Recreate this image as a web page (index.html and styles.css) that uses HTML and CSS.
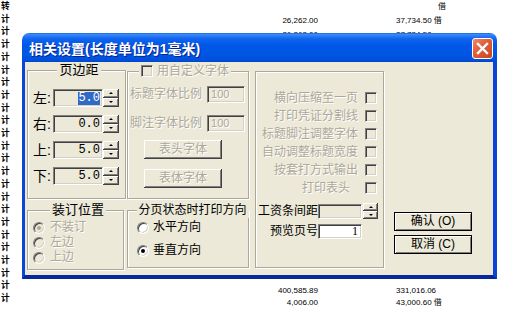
FILE: index.html
```html
<!DOCTYPE html>
<html lang="zh-CN">
<head>
<meta charset="utf-8">
<title>相关设置</title>
<link rel="stylesheet" href="styles.css">
</head>
<body>
<div class="page">
  <div class="bg-left">
    <div>转</div><div>计</div><div>计</div><div>计</div><div>计</div>
    <div>计</div><div>计</div><div>计</div><div>计</div><div>计</div>
    <div>计</div><div>计</div><div>计</div><div>计</div><div>计</div>
    <div>计</div><div>计</div><div>计</div><div>计</div><div>计</div>
    <div>计</div><div>计</div><div>计</div><div>计</div>
  </div>
  <div class="bg-nums">
    <div class="nums-top">
      <div class="nrow"><span class="c1"></span><span class="c2 c2-only">借</span></div>
      <div class="nrow"><span class="c1">26,262.00</span><span class="c2">37,734.50 借</span></div>
      <div class="nrow"><span class="c1">26,262.00</span><span class="c2">37,734.50</span></div>
    </div>
    <div class="nums-bottom">
      <div class="nrow"><span class="c1">400,585.89</span><span class="c2">331,016.06</span></div>
      <div class="nrow"><span class="c1">4,006.00</span><span class="c2">43,000.60 借</span></div>
    </div>
  </div>
</div>

<div class="dialog">
  <div class="titlebar">
    <span class="title">相关设置(长度单位为1毫米)</span>
    <span class="close">
      <svg width="19" height="19" viewBox="0 0 19 19"><path d="M5 5 L14 14 M14 5 L5 14" stroke="#fff" stroke-width="2.4" stroke-linecap="square"/></svg>
    </span>
  </div>
  <div class="client">
    <div class="col col-a">
      <div class="group g-margin">
        <div class="gtitle gtitle-lg">页边距</div>
        <div class="mrow first"><span class="mlabel">左:</span><span class="edit edit-m"><span class="sel">5.0</span></span><span class="spin"><i class="up"></i><i class="down"></i></span></div>
        <div class="mrow"><span class="mlabel">右:</span><span class="edit edit-m">0.0</span><span class="spin"><i class="up"></i><i class="down"></i></span></div>
        <div class="mrow"><span class="mlabel">上:</span><span class="edit edit-m">5.0</span><span class="spin"><i class="up"></i><i class="down"></i></span></div>
        <div class="mrow"><span class="mlabel">下:</span><span class="edit edit-m">5.0</span><span class="spin"><i class="up"></i><i class="down"></i></span></div>
      </div>
      <div class="group g-bind">
        <div class="gtitle gtitle-lg">装订位置</div>
        <div class="rrow first dis"><span class="radio dis-radio checked"></span><span class="rtext">不装订</span></div>
        <div class="rrow dis"><span class="radio dis-radio"></span><span class="rtext">左边</span></div>
        <div class="rrow dis"><span class="radio dis-radio"></span><span class="rtext">上边</span></div>
      </div>
    </div>

    <div class="col col-b">
      <div class="group g-font">
        <div class="gtitle gtitle-left dis"><span class="check"></span><span>用自定义字体</span></div>
        <div class="frow first dis"><span class="ftext">标题字体比例</span><span class="edit edit-f">100</span></div>
        <div class="frow dis"><span class="ftext">脚注字体比例</span><span class="edit edit-f">100</span></div>
        <div class="rbtn first dis">表头字体</div>
        <div class="rbtn dis">表体字体</div>
      </div>
      <div class="group g-dir">
        <div class="gtitle">分页状态时打印方向</div>
        <div class="rrow first"><span class="radio"></span><span class="rtext">水平方向</span></div>
        <div class="rrow second"><span class="radio checked"></span><span class="rtext">垂直方向</span></div>
      </div>
    </div>

    <div class="col col-c">
      <div class="group g-opts">
        <div class="crow first dis"><span class="ctext">横向压缩至一页</span><span class="check"></span></div>
        <div class="crow dis"><span class="ctext">打印凭证分割线</span><span class="check"></span></div>
        <div class="crow dis"><span class="ctext">标题脚注调整字体</span><span class="check"></span></div>
        <div class="crow dis"><span class="ctext">自动调整标题宽度</span><span class="check"></span></div>
        <div class="crow dis"><span class="ctext">按套打方式输出</span><span class="check"></span></div>
        <div class="crow dis"><span class="ctext ctext-short">打印表头</span><span class="check"></span></div>
        <div class="srow first"><span class="slabel">工资条间距</span><span class="edit edit-s"></span><span class="spin spin-s"><i class="up"></i><i class="down"></i></span></div>
        <div class="srow second"><span class="slabel">预览页号</span><span class="edit edit-s edit-white">1</span></div>
      </div>
    </div>

    <div class="col col-d">
      <div class="btn first">确认 (O)</div>
      <div class="btn">取消 (C)</div>
    </div>
  </div>
</div>
</body>
</html>
```

FILE: styles.css
```css
* { box-sizing: border-box; margin: 0; padding: 0; }

html, body {
  width: 520px;
  height: 312px;
  overflow: hidden;
  background: #fff;
}

body {
  position: relative;
  font-family: "Liberation Sans", "Noto Sans CJK SC", sans-serif;
  color: #000;
}

/* ---------- background sheet ---------- */
.page {
  display: flex;
  height: 312px;
}

.bg-left {
  width: 12px;
  padding: 0 0 0 1px;
  font: 700 8.7px/12.7px "Noto Sans CJK SC", sans-serif;
  white-space: nowrap;
}

.bg-nums {
  margin-left: 258px;
  height: 312px;
  padding-bottom: 3px;
  display: flex;
  flex-direction: column;
  justify-content: space-between;
  font: 8px/14px "Liberation Sans", "Noto Sans CJK SC", sans-serif;
}

.nums-bottom { line-height: 12px; }

.nrow {
  display: flex;
  white-space: nowrap;
}

.c1 {
  width: 48px;
  text-align: right;
}

.c2 { margin-left: 78px; }
.c2-only { padding-left: 42px; }

/* ---------- dialog window ---------- */
.dialog {
  position: absolute;
  left: 22px;
  top: 33px;
  width: 475px;
  height: 246px;
  display: flex;
  flex-direction: column;
}

.titlebar {
  height: 29px;
  flex: none;
  display: flex;
  align-items: center;
  padding: 2px 4px 0 7px;
  border-radius: 7px 7px 0 0;
  background: linear-gradient(to bottom,
    #0a5ad8 0px, #3d8ef8 1px, #2a7bf6 3px, #0f63ee 6px,
    #0058e8 12px, #0055e4 22px, #0050dc 27px, #0046c8 29px);
}

.title {
  color: #fff;
  font: 700 14px/20px "Liberation Sans", "Noto Sans CJK SC", sans-serif;
  text-shadow: 1px 1px 0 #0a2290;
  white-space: nowrap;
}

.close {
  margin-left: auto;
  width: 21px;
  height: 21px;
  border: 1px solid #fff;
  border-radius: 3px;
  background: linear-gradient(135deg, #ef8a6c 0%, #e1603c 40%, #c9441f 100%);
  display: flex;
  align-items: center;
  justify-content: center;
}

.client {
  flex: 1;
  display: flex;
  align-items: flex-start;
  background: #ece9d8;
  border-style: solid;
  border-width: 0 4px 4px 3px;
  border-color: #0b46d8 #0a44d6 #08289e #0b46d8;
  padding: 8px 0 0 2px;
  font-size: 12px;
}

.col { display: flex; flex-direction: column; }
.col-a { width: 99px; }
.col-b { width: 122px; margin-left: 1px; margin-top: 1px; }
.col-c { width: 129px; margin-left: 6px; margin-top: 1px; }
.col-d { width: 78px; margin-left: 10px; }

/* ---------- group boxes ---------- */
.group {
  border: 1px solid #aca899;
  box-shadow: inset 1px 1px 0 #fff, 1px 1px 0 #fff;
  display: flex;
  flex-direction: column;
}

.gtitle {
  align-self: center;
  margin-top: -9px;
  padding: 0 2px;
  background: #ece9d8;
  font: 12px/16px "Liberation Sans", "Noto Sans CJK SC", sans-serif;
  white-space: nowrap;
  display: flex;
  align-items: center;
}

.gtitle-lg { font-size: 13px; }

.gtitle-left {
  align-self: flex-start;
  margin-left: 9px;
}

.gtitle-left .check { margin-right: 4px; }

.dis {
  color: #aca899;
  text-shadow: 1px 1px 0 #fff;
}

.g-margin { height: 129px; padding-left: 5px; }
.g-bind { width: 97px; height: 60px; margin-top: 11px; padding-left: 5px; }
.g-font { height: 128px; padding-left: 2px; }
.g-dir { height: 58px; margin-top: 11px; padding-left: 9px; }
.g-opts { height: 197px; }

/* margin rows */
.mrow {
  display: flex;
  align-items: center;
  height: 18px;
  margin-top: 8px;
}
.mrow.first { margin-top: 11px; }

.mlabel {
  width: 20px;
  font: 14px/18px "Liberation Sans", "Noto Sans CJK SC", sans-serif;
}

/* edits */
.edit {
  border: 1px solid;
  border-color: #808080 #fff #fff #808080;
  box-shadow: inset 1px 1px 0 #404040, inset -1px -1px 0 #d4d0c8;
  background: #ece9d8;
  display: flex;
  align-items: center;
}

.edit-m {
  width: 50px;
  height: 18px;
  justify-content: flex-end;
  padding-right: 2px;
  font: 12px/13px "Liberation Mono", monospace;
}

.sel {
  background: #316ac5;
  color: #fff;
}

.edit-f {
  width: 38px;
  height: 17px;
  margin-left: 5px;
  padding-left: 3px;
  font: 11px/13px "Liberation Sans", sans-serif;
}

.edit-s {
  width: 44px;
  height: 15px;
}

.edit-white {
  background: #fff;
  justify-content: flex-end;
  padding-right: 3px;
  font: 12px/13px "Liberation Serif", serif;
}

/* spin buttons */
.spin {
  width: 16px;
  height: 18px;
  display: flex;
  flex-direction: column;
}

.spin i {
  flex: 1;
  background: #ece9d8;
  box-shadow: inset -1px -1px 0 #404040, inset 1px 1px 0 #fff, inset -2px -2px 0 #808080;
  display: flex;
  align-items: center;
  justify-content: center;
}

.spin i::after {
  content: "";
  border-left: 2px solid transparent;
  border-right: 2px solid transparent;
}

.spin .up::after { border-bottom: 2px solid #000; margin-top: -1px; }
.spin .down::after { border-top: 2px solid #000; margin-top: -1px; }

.spin-s {
  width: 15px;
  height: 16px;
  margin-left: 1px;
}

/* radios */
.rrow {
  display: flex;
  align-items: center;
  height: 15px;
}
.rrow.first { margin-top: 2px; }
.g-dir .rrow.second { margin-top: 8px; }

.radio {
  position: relative;
  width: 12px;
  height: 12px;
  flex: none;
  border-radius: 50%;
  background: #fff;
  border: 1px solid;
  border-color: #808080 #fff #fff #808080;
  box-shadow: inset 1px 1px 0 #404040, inset -1px -1px 0 #d4d0c8;
}

.dis-radio { background: #ece9d8; }

.radio.checked::after {
  content: "";
  position: absolute;
  left: 3px;
  top: 3px;
  width: 4px;
  height: 4px;
  border-radius: 50%;
  background: #000;
}

.dis-radio.checked::after { background: #aca899; }

.rtext {
  margin-left: 4px;
  line-height: 15px;
}

.g-bind .rtext { margin-left: 5px; }

/* checkboxes */
.check {
  display: inline-block;
  width: 12px;
  height: 12px;
  flex: none;
  background: #ece9d8;
  border: 1px solid;
  border-color: #808080 #fff #fff #808080;
  box-shadow: inset 1px 1px 0 #404040, inset -1px -1px 0 #d4d0c8;
}

/* font group rows */
.frow {
  display: flex;
  align-items: center;
  height: 17px;
  margin-top: 12px;
}
.frow.first { margin-top: 7px; }

.ftext { line-height: 17px; }

.rbtn {
  width: 78px;
  height: 19px;
  margin: 10px 0 0 14px;
  background: #ece9d8;
  box-shadow: inset -1px -1px 0 #404040, inset 1px 1px 0 #fff, inset -2px -2px 0 #808080;
  display: flex;
  align-items: center;
  justify-content: center;
  line-height: 17px;
}
.rbtn.first { margin-top: 8px; }

/* options group */
.crow {
  display: flex;
  justify-content: flex-end;
  align-items: center;
  height: 12px;
  margin-top: 6px;
  padding-right: 6px;
}
.crow.first { margin-top: 20px; }

.ctext {
  margin-right: 7px;
  line-height: 12px;
  white-space: nowrap;
}

.ctext-short { margin-right: 15px; }

.srow {
  display: flex;
  align-items: center;
  height: 16px;
  padding-left: 1px;
}
.srow.first { margin-top: 9px; }
.srow.second { margin-top: 5px; height: 15px; }

.slabel {
  width: 61px;
  text-align: right;
  line-height: 15px;
  white-space: nowrap;
}

/* dialog buttons */
.btn {
  width: 78px;
  height: 19px;
  margin-top: 4px;
  background: #ece9d8;
  border: 1px solid #000;
  box-shadow: inset 1px 1px 0 #fff, inset -1px -1px 0 #808080;
  display: flex;
  align-items: center;
  justify-content: center;
  font-size: 12px;
  line-height: 17px;
  white-space: nowrap;
}
.btn.first { margin-top: 142px; }
```
